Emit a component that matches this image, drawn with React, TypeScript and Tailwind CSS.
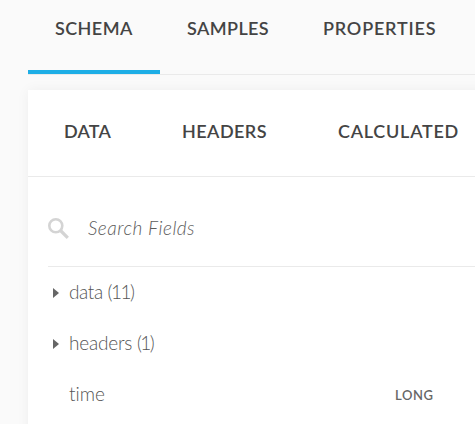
const mainTabs = [
  { label: 'SCHEMA', size: 'w-[132px] tracking-[0.42px]', active: true },
  { label: 'SAMPLES', size: 'w-[136px] tracking-[0.4px]', active: false },
  { label: 'PROPERTIES', size: 'w-[179px] tracking-[0.8px]', active: false },
];

const cardTabs = [
  { label: 'DATA', size: 'w-[118px] tracking-[0.2px]' },
  { label: 'HEADERS', size: 'w-[156px] tracking-[0.45px]' },
  { label: 'CALCULATED', size: 'w-[137px] tracking-[0.75px]' },
];

const fields = [
  { name: 'data', count: '(11)', spacing: 'tracking-[-0.35px]', type: '' },
  { name: 'headers', count: '(1)', spacing: 'tracking-[-0.2px]', type: '' },
  { name: 'time', count: '', spacing: 'tracking-[-0.05px]', type: 'LONG' },
];

export default function App() {
  return (
    <div className="h-[424px] w-[475px] overflow-hidden bg-[#fafafa] pl-7 font-['Lato',sans-serif] text-[#444]">
      <nav className="flex h-[75px] border-b border-[#eaeaea]">
        {mainTabs.map((tab) => (
          <button
            key={tab.label}
            className={`${tab.size} flex h-[74px] shrink-0 items-start border-b-4 pt-4 pl-[27px] text-[18px] leading-6 font-semibold whitespace-nowrap ${
              tab.active ? 'border-[#1eaee6]' : 'border-transparent'
            }`}
          >
            {tab.label}
          </button>
        ))}
      </nav>
      <section className="mt-[15px] h-[400px] w-[600px] bg-white shadow-[0_0_12px_rgba(0,0,0,0.05)]">
        <nav className="flex h-[87px] border-b border-[#eaeaea] pt-[29px] pl-9">
          {cardTabs.map((tab) => (
            <button
              key={tab.label}
              className={`${tab.size} flex h-6 shrink-0 items-center text-[18px] leading-6 font-semibold whitespace-nowrap`}
            >
              {tab.label}
            </button>
          ))}
        </nav>
        <div className="pl-5">
          <div className="flex h-[90px] items-start border-b border-[#eaeaea] pt-[39px]">
            <svg className="mt-[2px] size-[21px] shrink-0" viewBox="0 0 21 21" fill="none" stroke="#d4d4d4">
              <circle cx="7.8" cy="7.8" r="6.5" strokeWidth="2.6" />
              <path d="M12.5 12.5 19.8 19.8" strokeWidth="3.2" />
            </svg>
            <input
              className="ml-[19px] w-[300px] text-[19px] leading-6 font-light tracking-[0.48px] italic outline-none placeholder:text-[#5c5c5c]"
              placeholder="Search Fields"
            />
          </div>
          <ul>
            {fields.map((field) => (
              <li key={field.name} className="flex h-[51px] items-center text-[19px] leading-6 font-light text-[#555]">
                <span className="flex w-[21px] pt-[1px] pl-[5px]">
                  {field.count && (
                    <svg className="h-[10px] w-[6px]" viewBox="0 0 6 10" fill="#666">
                      <path d="M0 0 6 5 0 10Z" />
                    </svg>
                  )}
                </span>
                <span className="w-[326px] pb-[1px]">
                  <span className={field.spacing}>{field.name}</span>
                  {field.count && <span className="ml-[1px] tracking-[-1.5px]"> {field.count}</span>}
                </span>
                <span className="text-[13px] font-semibold tracking-[0.6px] text-[#666]">{field.type}</span>
              </li>
            ))}
          </ul>
        </div>
      </section>
    </div>
  );
}
